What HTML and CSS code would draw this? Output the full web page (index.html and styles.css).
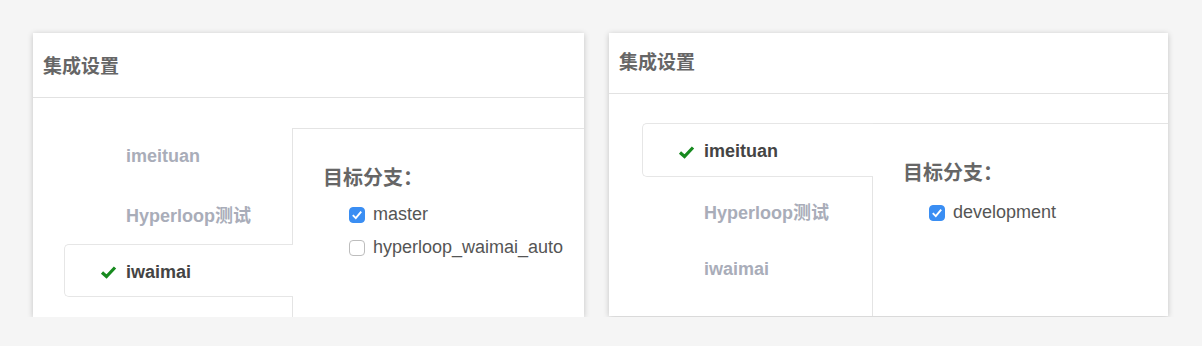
FILE: index.html
```html
<!DOCTYPE html>
<html lang="zh-CN">

<head>
  <meta charset="UTF-8">
  <meta name="viewport" content="width=device-width, initial-scale=1.0">
  <title>集成设置</title>
  <link rel="stylesheet" href="styles.css">
</head>

<body>
  <div class="page">
    <!-- 左：iwaimai 选中 -->
    <div class="card card-left">
      <div class="card-header">集成设置</div>
      <div class="card-body">
        <ul class="tabs">
          <li class="tab"><span class="tab-icon"></span>imeituan</li>
          <li class="tab"><span class="tab-icon"></span>Hyperloop测试</li>
          <li class="tab active">
            <span class="tab-icon">
              <svg width="17" height="14" viewBox="0 0 17 14"><path d="M2 7.5 L6.5 11.5 L15 2.5" fill="none" stroke="#178a1f" stroke-width="3.2" stroke-linejoin="miter"/></svg>
            </span>iwaimai
          </li>
        </ul>
        <div class="panel">
          <h3 class="panel-title">目标分支：</h3>
          <label class="branch"><input type="checkbox" checked>master</label>
          <label class="branch"><input type="checkbox">hyperloop_waimai_auto</label>
        </div>
      </div>
    </div>

    <!-- 右：imeituan 选中 -->
    <div class="card card-right">
      <div class="card-header">集成设置</div>
      <div class="card-body">
        <ul class="tabs">
          <li class="tab active">
            <span class="tab-icon">
              <svg width="17" height="14" viewBox="0 0 17 14"><path d="M2 7.5 L6.5 11.5 L15 2.5" fill="none" stroke="#178a1f" stroke-width="3.2" stroke-linejoin="miter"/></svg>
            </span>imeituan
          </li>
          <li class="tab"><span class="tab-icon"></span>Hyperloop测试</li>
          <li class="tab"><span class="tab-icon"></span>iwaimai</li>
        </ul>
        <div class="panel">
          <h3 class="panel-title">目标分支：</h3>
          <label class="branch"><input type="checkbox" checked>development</label>
        </div>
      </div>
    </div>
  </div>
</body>

</html>
```

FILE: styles.css
```css
body {
  margin: 0;
  background: #f5f5f5;
  font-family: "Liberation Sans", "Noto Sans CJK SC", sans-serif;
}

.page {
  display: flex;
  align-items: flex-start;
  gap: 25px;
  padding: 33px 0 0 33px;
}

.card {
  display: flex;
  flex-direction: column;
  background: #fff;
  box-shadow: 0 1px 6px rgba(0, 0, 0, 0.2);
  overflow: hidden;
}

.card-left {
  width: 551px;
  height: 284px;
}

.card-right {
  width: 559px;
  height: 283px;
}

.card-header {
  height: 64px;
  line-height: 63px;
  padding-left: 10px;
  border-bottom: 1px solid #e2e2e2;
  font-family: "Noto Sans CJK SC", sans-serif;
  font-size: 19px;
  font-weight: 700;
  color: #666;
}

.card-right .card-header {
  height: 60px;
  line-height: 55px;
}

.card-body {
  flex: 1;
  display: flex;
  padding-top: 30px;
}

.card-right .card-body {
  padding-top: 29px;
}

.tabs {
  list-style: none;
  margin: 0;
  padding: 0 0 0 31px;
  width: 228px;
  flex-shrink: 0;
}

.card-right .tabs {
  padding-left: 33px;
  width: 230px;
}

.tab {
  display: flex;
  align-items: center;
  height: 53px;
  margin-bottom: 5px;
  padding: 3px 0 0 36px;
  box-sizing: border-box;
  font-size: 18px;
  font-weight: 700;
  color: #a9adb9;
}

.card-right .tab {
  height: 54px;
}

.tab-icon {
  display: inline-flex;
  width: 26px;
}

.tab.active {
  position: relative;
  z-index: 1;
  margin-right: -1px;
  background: #fff;
  border: 1px solid #e6e6e6;
  border-right: none;
  border-radius: 5px 0 0 5px;
  padding-left: 35px;
  color: #444;
}

.panel {
  flex: 1;
  border-top: 1px solid #e4e4e4;
  border-left: 1px solid #e4e4e4;
  padding: 34px 30px 0 30px;
}

.panel-title {
  margin: 0 0 7px;
  font-family: "Noto Sans CJK SC", sans-serif;
  font-size: 20px;
  font-weight: 700;
  line-height: 28px;
  color: #666;
}

.card-right .panel-title {
  margin-bottom: 10px;
}

.branch {
  display: flex;
  align-items: center;
  height: 33px;
  padding-left: 26px;
  font-size: 18px;
  color: #555;
}

.branch input {
  appearance: none;
  width: 16px;
  height: 16px;
  margin: 0 8px 0 0;
  border: 1px solid #bdbdbd;
  border-radius: 4px;
  background: #fff;
}

.branch input:checked {
  border-color: #3a8ef3;
  background: #3a8ef3 url("data:image/svg+xml,%3Csvg xmlns='http://www.w3.org/2000/svg' viewBox='0 0 16 16'%3E%3Cpath d='M3.8 8.2 L6.8 11.2 L12.2 4.6' fill='none' stroke='white' stroke-width='1.9'/%3E%3C/svg%3E") center / 16px no-repeat;
}
```
